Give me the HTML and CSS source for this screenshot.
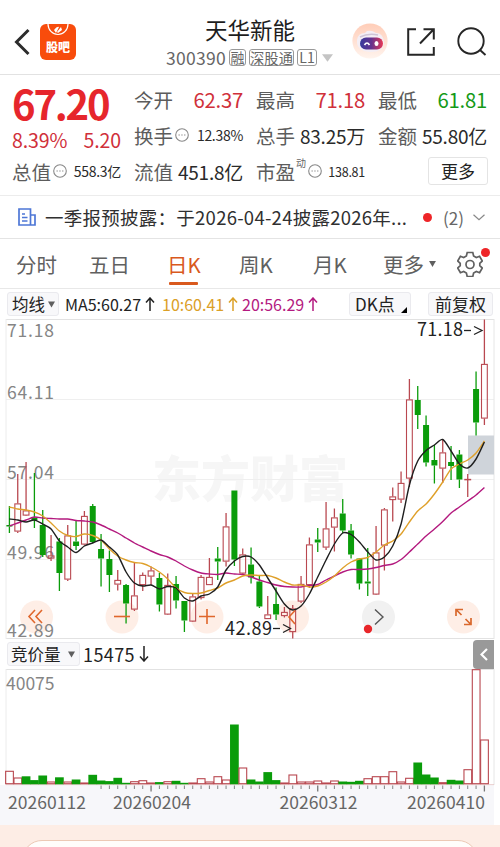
FILE: index.html
```html
<!DOCTYPE html>
<html lang="zh-CN">
<head>
<meta charset="utf-8">
<title>天华新能 300390</title>
<link rel="stylesheet" href="styles.css">
</head>
<body>
<header class="header">
  <svg class="back" viewBox="0 0 18 28"><path d="M15.5 2 3.5 14l12 12"/></svg>
  <div class="guba">
    <svg viewBox="0 0 36 15"><path d="M8 0a10 10.500 0 0 0 20 0" fill="none" stroke="#fff" stroke-width="1.2"/><path d="M14 6q3-4 5-3l-3 6zM17 8l4-5 1 3-4 3z" fill="#fff"/></svg>
    <b>股吧</b>
  </div>
  <div class="title">
    <h1>天华新能</h1>
    <div class="sub"><span class="code">300390</span><i class="tag">融</i><i class="tag wide">深股通</i><i class="tag lv">L1</i><svg class="caret" viewBox="0 0 12 8"><path d="M0 0h12L6 8z" fill="#c4c4c4"/></svg></div>
  </div>
  <svg class="robot" viewBox="0 0 36 36">
    <defs>
      <linearGradient id="halo" x2="0" y2="1"><stop offset="0" stop-color="#ffcdb8"/><stop offset="1" stop-color="#fff4ee"/></linearGradient>
      <linearGradient id="visor"><stop offset="0" stop-color="#373b9d"/><stop offset=".5" stop-color="#66338e"/><stop offset="1" stop-color="#e83754"/></linearGradient>
    </defs>
    <circle cx="18" cy="18" r="17.6" fill="url(#halo)"/>
    <path d="M5 17q1-7 8-7l2-2q5-1 9 2 7 0 8 9 0 10-14 10Q4 28 5 17z" fill="#f4eef5"/>
    <path d="M8 14q8-4 18-2" stroke="#cfc4d6" stroke-width="1.5" fill="none"/>
    <rect x="8" y="14.500" width="23" height="12" rx="6" fill="url(#visor)"/>
    <path d="M12.500 22q2.500-4 5 0" fill="none" stroke="#fff" stroke-width="1.6"/><ellipse cx="24.500" cy="20.500" rx="2" ry="2.600" fill="#fff"/>
  </svg>
  <svg class="share" viewBox="0 0 28 28"><path d="M9 1.2H1.200V26.800H26.800V19M13 15.500 26 2M16.500 1.200H26.800V11.500"/></svg>
  <svg class="search" viewBox="0 0 30 30"><circle cx="14" cy="14" r="12.700"/><path d="m23 23 5.500 5"/></svg>
</header>

<section class="quote">
  <div class="col first">
    <div class="price">67.20</div>
    <div class="row change"><span>8.39%</span><span>5.20</span></div>
    <div class="row"><label>总值</label><svg class="info" viewBox="0 0 14 14"><circle cx="7" cy="7" r="6.300"/><path d="M3.500 7h1.300m1.500 0h1.300m1.500 0h1.300"/></svg><span class="val small">558.3亿</span></div>
  </div>
  <div class="col">
    <div class="row"><label>今开</label><span class="val num up">62.37</span></div>
    <div class="row"><label>换手</label><svg class="info" viewBox="0 0 14 14"><circle cx="7" cy="7" r="6.300"/><path d="M3.500 7h1.300m1.500 0h1.300m1.500 0h1.300"/></svg><span class="val small">12.38%</span></div>
    <div class="row"><label>流值</label><span class="val">451.8亿</span></div>
  </div>
  <div class="col">
    <div class="row"><label>最高</label><span class="val num up">71.18</span></div>
    <div class="row"><label>总手</label><span class="val">83.25万</span></div>
    <div class="row"><label>市盈</label><sup>动</sup><svg class="info" viewBox="0 0 14 14"><circle cx="7" cy="7" r="6.300"/><path d="M3.500 7h1.300m1.500 0h1.300m1.500 0h1.300"/></svg><span class="val tiny">138.81</span></div>
  </div>
  <div class="col">
    <div class="row"><label>最低</label><span class="val num down">61.81</span></div>
    <div class="row"><label>金额</label><span class="val">55.80亿</span></div>
    <div class="row end"><button class="more">更多</button></div>
  </div>
</section>

<section class="notice">
  <svg class="news" viewBox="0 0 18 18"><path d="M1 1h11.500v16H1zM12.500 7H17v10h-4.500M4 6h3M4 9.500h5.500M4 13h5.500"/></svg>
  <span class="headline">一季报预披露：于2026-04-24披露2026年...</span>
  <i class="dot"></i><span class="count">(2)</span>
  <svg class="chev" viewBox="0 0 12 7"><path d="m.5.800 5.500 5 5.500-5"/></svg>
</section>

<nav class="tabs">
  <span class="t1">分时</span><span class="t2">五日</span><span class="t3 on">日K</span><span class="t4">周K</span><span class="t5">月K</span><span class="t6">更多</span>
  <svg class="tri" viewBox="0 0 8 7"><path d="M0 0h8L4 7z"/></svg>
  <div class="gear">
    <svg viewBox="0 0 26 26"><path d="M10.200 1.500h5.600l.8 3.500 2.700 1.500 3.300-1.200 2.700 4.700-2.500 2.300v2.400l2.500 2.300-2.700 4.700-3.300-1.200-2.700 1.500-.8 3.500h-5.600l-.8-3.500-2.700-1.500-3.300 1.200-2.700-4.700 2.500-2.300v-2.400L.7 10l2.700-4.700 3.300 1.200L9.400 5z"/><circle cx="13" cy="13.500" r="4"/></svg>
    <i class="dot"></i>
  </div>
</nav>

<section class="legend">
  <button class="chip avg">均线<svg class="tri" viewBox="0 0 8 7"><path d="M0 0h8L4 7z"/></svg></button>
  <span class="ma m5">MA5:60.27<svg viewBox="0 0 10 14"><path d="M5 14V1M1 5.500 5 1l4 4.500"/></svg></span>
  <span class="ma m10">10:60.41<svg viewBox="0 0 10 14"><path d="M5 14V1M1 5.500 5 1l4 4.500"/></svg></span>
  <span class="ma m20">20:56.29<svg viewBox="0 0 10 14"><path d="M5 14V1M1 5.500 5 1l4 4.500"/></svg></span>
  <button class="chip dk">DK点<svg viewBox="0 0 6 6"><path d="M6 0v6H0z"/></svg></button>
  <button class="chip adj">前复权</button>
</section>

<svg class="kline" id="kline" viewBox="0 319 500 320"></svg>

<section class="indicator">
  <button class="chip vol">竞价量<svg class="tri" viewBox="0 0 8 7"><path d="M0 0h8L4 7z"/></svg></button>
  <span class="amount">15475<svg viewBox="0 0 10 16"><path d="M5 0v15M1 10.500 5 15l4-4.500"/></svg></span>
  <div class="fold"><svg viewBox="0 0 8 13"><path d="M7 1 1.500 6.500 7 12"/></svg></div>
</section>

<svg class="volume" id="volume" viewBox="0 669 500 156"></svg>

<footer class="footer"><div class="sheet"></div></footer>
<script src="chart.js"></script>
</body>
</html>
```
FILE: styles.css
```css
* { box-sizing: border-box; }
body {
  margin: 0; width: 500px; height: 847px; overflow: hidden; background: #fff; color: #222;
  font-family: "Noto Sans CJK SC", "Noto Sans", sans-serif;
}
svg { display: block; flex: none; }
i { font-style: normal; }
button { font: inherit; color: inherit; padding: 0; margin: 0; }

.header { height: 75px; border-bottom: 1px solid #e2e2e2; display: flex; padding-left: 13px; }
.back { width: 18px; height: 28px; margin-top: 28px; fill: none; stroke: #2c2c2c; stroke-width: 3; }
.guba { width: 36px; height: 36px; margin: 24px 0 0 9px; border-radius: 6px; background: #f84c0c; color: #fff; }
.guba svg { width: 36px; height: 15px; }
.guba b { display: block; text-align: center; font-size: 12px; line-height: 15px; font-weight: 900; }
.title { width: 168px; margin-left: 90px; }
.title h1 { margin: 14px 0 0 39px; font-size: 22.500px; line-height: 30px; font-weight: 400; color: #1d1d1d; white-space: nowrap; }
.sub { display: flex; align-items: center; height: 27px; color: #666; }
.code { font-size: 17.500px; letter-spacing: .3px; width: 63px; }
.tag { height: 17px; width: 17px; border: 1px solid #999; border-radius: 3px; font-size: 14px; line-height: 15px; text-align: center; white-space: nowrap; display: flex; justify-content: center; }
.tag.wide { width: 45px; margin-left: 3px; font-size: 14.300px; }
.tag.lv { width: 20px; margin-left: 3px; }
.caret { width: 11px; height: 8px; margin-left: 5px; }
.robot { width: 36px; height: 36px; margin: 23px 0 0 18px; }
.share { width: 28px; height: 28px; margin: 28px 0 0 19px; fill: none; stroke: #262626; stroke-width: 2; }
.search { width: 30px; height: 30px; margin: 27px 0 0 22px; fill: none; stroke: #262626; stroke-width: 1.900; }

.quote { height: 121px; border-bottom: 1px solid #ececec; display: flex; gap: 14px; padding: 6px 12px 0 13px; }
.col { width: 108px; }
.row { height: 36px; display: flex; align-items: center; white-space: nowrap; }
.row label { font-size: 19.500px; color: #5c5c5c; width: 40px; margin-left: -1px; }
.price { height: 46px; line-height: 45px; font-size: 40px; font-weight: 700; letter-spacing: -2.200px; margin-left: -1px; color: #e6262c; }
.change { height: 26px; justify-content: space-between; color: #d0303a; font-size: 19.500px; line-height: 26px; letter-spacing: -.1px; margin-left: -1px; }
.first .row:last-child { height: 36px; }
.info { width: 14px; height: 14px; fill: none; stroke: #888; stroke-width: 1.100; margin-left: 1px; }
.val { margin-left: auto; font-size: 19px; letter-spacing: -.25px; color: #2a2a2a; }
.num { font-size: 20.300px; }
.small { font-size: 14px; letter-spacing: -.3px; }
.tiny { font-size: 12.500px; }
.row sup { font-size: 10px; line-height: 12px; width: 11px; color: #666; margin: -16px 0 0; }
.up { color: #d0303a; }
.down { color: #159a18; }
.end { justify-content: flex-end; margin-right: -1px; }
.more { width: 60px; height: 28px; border: 1px solid #e4e4e4; border-radius: 3px; background: #fff; font-size: 17px; line-height: 24px; }

.notice { height: 43px; border-bottom: 1px solid #e4e4e4; display: flex; align-items: center; padding-left: 18px; white-space: nowrap; }
.news { width: 18px; height: 18px; fill: none; stroke: #4e77d6; stroke-width: 1.700; }
.headline { flex: none; width: 364px; margin-left: 9px; font-size: 18.500px; letter-spacing: .26px; color: #303030; }
.dot { flex: none; width: 9px; height: 9px; border-radius: 50%; background: #ee2528; }
.notice .dot { margin-left: 14px; }
.count { width: 30px; margin-left: 11px; font-size: 17px; color: #666; }
.chev { width: 12px; height: 7px; fill: none; stroke: #888; stroke-width: 1.200; }

.tabs { height: 50px; border-bottom: 1px solid #e8e8e8; display: flex; padding-left: 16px; font-size: 20.500px; line-height: 50px; color: #606060; }
.tabs span { flex: none; white-space: nowrap; }
.t1 { width: 73px; } .t2 { width: 78px; } .t3 { width: 72px; } .t4 { width: 74px; } .t5 { width: 70px; } .t6 { width: 46px; }
.on { color: #d9591d; }
.on::after { content: ""; display: block; width: 29px; height: 3px; margin: -7px 0 0 2px; background: #d9591d; border-radius: 1px; }
.tri { width: 8px; height: 7px; fill: #5f5f5f; }
.tabs .tri { width: 7px; height: 6px; margin-top: 22px; }
.gear { position: relative; margin: 12px 0 0 21px; width: 26px; height: 26px; }
.gear svg { width: 26px; height: 26px; fill: none; stroke: #606060; stroke-width: 1.700; }
.gear .dot { position: absolute; right: -7px; top: -3px; }

.legend { height: 30px; display: flex; align-items: center; padding-left: 7px; white-space: nowrap; }
.chip { height: 24px; border: 1px solid #eaeaee; border-radius: 3px; background: #f8f8fa; font-size: 16.500px; line-height: 22px; color: #222; display: flex; align-items: center; flex: none; white-space: nowrap; }
.avg { width: 52px; padding-left: 4px; }
.avg .tri { width: 7px; margin-left: 3px; }
.ma { display: flex; align-items: center; font-size: 16px; }
.ma svg { width: 10px; height: 14px; margin-left: 4px; fill: none; stroke: currentColor; stroke-width: 1.500; }
.m5 { width: 97px; margin-left: 6px; color: #222; }
.m10 { width: 80px; color: #dba027; }
.m20 { width: 107px; color: #b41a80; }
.dk { width: 62px; padding-left: 5px; font-size: 17px; }
.dk svg { width: 6px; height: 6px; margin: 12px 0 0 6px; }
.adj { width: 65px; margin-left: 17px; padding-left: 6px; font-size: 17px; }

.kline { width: 500px; height: 320px; overflow: visible; }
.indicator { height: 30px; display: flex; align-items: center; padding-left: 7px; }
.vol { width: 73px; padding-left: 3px; }
.vol .tri { width: 7px; margin-left: 7px; }
.amount { display: flex; align-items: center; margin-left: 3px; font-size: 18px; letter-spacing: .4px; }
.amount svg { width: 10px; height: 16px; margin-left: 4px; fill: none; stroke: #222; stroke-width: 1.500; }
.fold { width: 21px; height: 29px; margin: 0 6px 0 auto; border-radius: 4px 0 0 4px; background: #999; display: flex; align-items: center; justify-content: center; }
.fold svg { width: 8px; height: 13px; fill: none; stroke: #fff; stroke-width: 2.200; }
.volume { width: 500px; height: 156px; }
.label { font-size: 17.500px; fill: #858585; }
.date { font-size: 17.500px; fill: #666; }
.mark { font-size: 18px; fill: #222; }
.water { font-size: 49px; font-weight: 900; fill: #f6f6f6; }

.footer { height: 22px; background: #fdede5; padding: 15px 22px 0; overflow: hidden; }
.sheet { height: 40px; border: 1px solid #ecc9b5; border-radius: 24px; background: #fffdfb; }
```
FILE: chart.js
```js
const RED = '#b94850', GREEN = '#0a9c0a';
const STEP = 25 / 3, X0 = 9.4;
const px = i => X0 + i * STEP;

// [direction, high, body top, body bottom, low]; direction 1 = rise, 0 = fall
const candles = [
  [0,506,525,526.5,533],[1,474,503.5,531.5,533],[1,462,510.5,515.5,516],[0,473,517.5,520,528],
  [0,510,525,555,557],[1,535,555.5,558.5,561],[0,538,541.5,573,591],[1,525,535.5,579.5,581],
  [0,521,541.5,546,550],[1,511,516,544.5,545.5],[0,504,506,542,543],[0,534,549,558.5,586.5],
  [0,550.5,559,575,592],[1,570,580,584.5,590.5],[0,584,585,603.5,623.5],[1,562.5,595.5,609.5,611],
  [1,572.5,575,585,591],[1,566.5,570.5,576.5,585],[0,573,578,604.5,611.5],[1,573.5,585,614.5,615],
  [0,576,584,600.5,608.5],[0,601,601,620.5,632],[1,593.5,596.5,621.5,622],[1,575,577,598,599.5],
  [1,558,577,585,585],[0,547,558.5,561.5,580],[1,513,526.5,561.5,566.5],[0,490.5,490.5,559.5,566],
  [1,548.5,554.5,573.5,575],[0,547.5,564.5,577.5,583.5],[0,576,581.5,606.5,608],[1,596,614.5,619,619],
  [0,587.5,604,614.5,620],[1,607,612,616,617.5],[1,605,608.5,632,638.5],[1,576,584,601.5,603],
  [1,537.5,544.5,585,588],[0,528,539.5,542.5,552],[1,502,528.5,547.5,550],[1,508.5,517.5,527.5,551.5],
  [0,499,513.5,530.5,533],[0,524,530.5,554.5,558.5],[0,558,558.5,583.5,589.5],[0,548,581.5,583.5,596],
  [1,526,552.5,594.5,595],[1,508,509.5,545.5,570.5],[1,487.5,496.5,500,521.5],[1,471.5,483,499.5,503],
  [1,379,399.5,478.5,487],[0,386,400,415,429],[0,415.5,425,462.5,466.5],[0,445,460,465.5,483.5],
  [1,439.5,452.5,468.5,483],[0,446,462,466,480],[0,450,454.5,479.5,488],[1,474,479,479.5,497],
  [0,371.5,389,422.5,435.5],[1,319.5,364,418.5,425]
];
const ma5 = [519,520,522,520,524,529,541,547,552.5,546,543,540,547,555,572,583,586,585,589,586.5,588,598,601,596,594,587,570,561,556.5,557,565,578,591,604,610,606,594,577,560,544,533,534.5,542,552,560,557,546,524,485,461,450.5,445,439.5,451,464,468,459,442];
const ma10 = [507,509,510,512,516,523,531,535.5,536.5,534,535.5,540,549,556,560,562.5,563.5,567,572,579,588,592.5,593.5,593,590.5,588,583,580,576,575,575.5,575.5,578,582,585,585,587,586,582,576,568,562,559,557.5,552,545,541,534,522,511,504,494,482,469,464,460,453,441];
const ma20 = [526,523,520,517,518,518.5,519,519,520.5,521,522,525,529,533,538,543,547,551,554.5,557,561,566,570,573,574,574.5,573,574,574.5,577,580,582.5,585,586.5,587,587,585.5,584.5,580,576,572,569.5,569.5,569,567.5,565.5,564,559.5,552,544,536,529,521.5,513,507,501,495,487.5];
// [direction, bar height]
const volumes = [
  [1,12.7],[1,6],[0,7.5],[0,3.7],[0,8.3],[1,2],[0,6.5],[1,2],[0,4.3],[1,1],[0,9],[0,3.3],[0,2.7],[0,6],[0,1],
  [1,2.3],[1,3.3],[1,1],[0,1.7],[1,2.3],[0,3],[0,1],[1,1],[1,5.3],[1,2],[1,7.3],[1,4],[0,59.3],[1,16],[0,4.3],
  [0,2.3],[0,11.7],[0,3.7],[1,1],[1,9],[1,2],[1,2],[1,3],[1,1],[1,3],[0,2.3],[0,2],[0,3],[1,5.3],[1,7.3],
  [1,7.3],[1,12.3],[1,2],[1,5.7],[0,21.3],[0,9.3],[0,6.3],[1,1.3],[0,4],[0,3.3],[1,14.3],[1,114.3],[1,44]
];

const line = (x1, y1, x2, y2, c, w = 1) => `<path d="M${x1} ${y1}L${x2} ${y2}" stroke="${c}" stroke-width="${w}"/>`;
const text = (x, y, s, cls, len) => `<text x="${x}" y="${y}" class="${cls}" textLength="${len}">${s}</text>`;
const disc = (x, c) => `<circle cx="${x}" cy="617" r="16.5" fill="${c}"/>`;
const stroke = (d, c, w = 1.6) => `<path d="${d}" fill="none" stroke="${c}" stroke-width="${w}"/>`;

function smooth(values) {
  const p = values.map((y, i) => [px(i), y]);
  let d = `M${p[0]}`;
  for (let i = 0; i < p.length - 1; i++) {
    const a = p[i - 1] || p[i], b = p[i], c = p[i + 1], e = p[i + 2] || c;
    d += `C${b[0] + (c[0] - a[0]) / 8} ${b[1] + (c[1] - a[1]) / 8} ${c[0] - (e[0] - b[0]) / 8} ${c[1] - (e[1] - b[1]) / 8} ${c}`;
  }
  return d;
}

let k = text(152, 497, '东方财富', 'water', 196);
[319.5, 399.5, 479.5, 559.5, 638.5].forEach((y, i) => { k += line(6, y, 494, y, i % 4 ? '#efefef' : '#e2e2e2'); });
k += line(6, 319, 6, 639, '#ececec') + line(494, 319, 494, 639, '#e6e6e6');
k += '<rect x="468" y="435.500" width="26" height="39" fill="#cfd4da"/>';
k += [36.5, 122, 207, 292.5].map(x => disc(x, '#feeee6')).join('') + disc(378.5, '#f1f1f1') + disc(463.5, '#feeee6');
[[71.18, 337], [64.11, 399], [57.04, 479], [49.96, 559], [42.89, 636.5]].forEach(([v, y]) => { k += text(7, y, v, 'label', 47); });
candles.forEach(([up, hi, top, bot, lo], i) => {
  const x = px(i), c = up ? RED : GREEN;
  k += line(x, hi, x, top, c, 1.3) + line(x, bot, x, lo, c, 1.3);
  k += up
    ? `<rect x="${x - 2.9}" y="${top + .4}" width="5.8" height="${Math.max(.4, bot - top - .8)}" fill="none" stroke="${c}" stroke-width="1.1"/>`
    : `<rect x="${x - 3}" y="${top}" width="6" height="${bot - top}" fill="${c}"/>`;
});
k += stroke(smooth(ma20), '#b3197e', 1.4) + stroke(smooth(ma10), '#dfa02a', 1.4) + stroke(smooth(ma5), '#1f1f1f', 1.4);
k += stroke('M35 610 29 616.500 35 623M42 610 36 616.500 42 623', '#e0672c');
k += stroke('M114 616.500H130', '#e0672c') + stroke('M199 616.500H215M207 609V624', '#e0672c');
k += stroke('M295 610.500 289 617 295 624', '#e0672c');
k += stroke('M375 609.500 383 617 375 624.500', '#555', 1.4);
k += stroke('M456 616V609.500H463M456 609.500 461.500 615M471 618V624.500H464M471 624.500 465.500 619', '#d9682c', 1.7);
k += '<circle cx="368" cy="629" r="4.200" fill="#e8262a"/>';
k += text(417, 336, '71.18', 'mark', 46) + stroke('M464 330.500H471', '#222', 1.3) + stroke('M474 326.500 482 330.500 474 334.500', '#222', 1.3);
k += text(225, 634.5, '42.89', 'mark', 47) + stroke('M273 628.500H280', '#222', 1.3) + stroke('M283 624.500 290.500 628.500 283 632.500', '#222', 1.3);
document.getElementById('kline').innerHTML = k;

const BASE = 783.8;
let v = '<rect x="0" y="785" width="494" height="40" fill="#f7f7fa"/>';
v += line(6, 669.5, 494, 669.5, '#e2e2e2') + line(6, 669, 6, 785, '#ececec') + line(494, 669, 494, 785, '#e6e6e6') + line(6, 784.6, 494, 784.6, '#e2bcbc', .7);
v += text(6, 690, '40075', 'label', 48.5);
volumes.forEach(([up, h], i) => {
  const x = px(i) - STEP / 2;
  v += up
    ? `<rect x="${x + .4}" y="${BASE - h + .2}" width="${STEP - .6}" height="${h - .3}" fill="none" stroke="${RED}" stroke-width="1.1"/>`
    : `<rect x="${x - .2}" y="${BASE - h}" width="${STEP + .4}" height="${h + .5}" fill="${GREEN}"/>`;
  if (i > 10) {
    const major = i === 17 || i === 37 || i === 57;
    v += line(px(i), 785.5, px(i), major ? 791.5 : 789, '#777', major ? 1.3 : .9);
  }
});
v += text(8, 808.5, '20260112', 'date', 78) + text(113, 808.5, '20260204', 'date', 78) + text(279.5, 808.5, '20260312', 'date', 78) + text(407, 808.5, '20260410', 'date', 78);
document.getElementById('volume').innerHTML = v;
```
